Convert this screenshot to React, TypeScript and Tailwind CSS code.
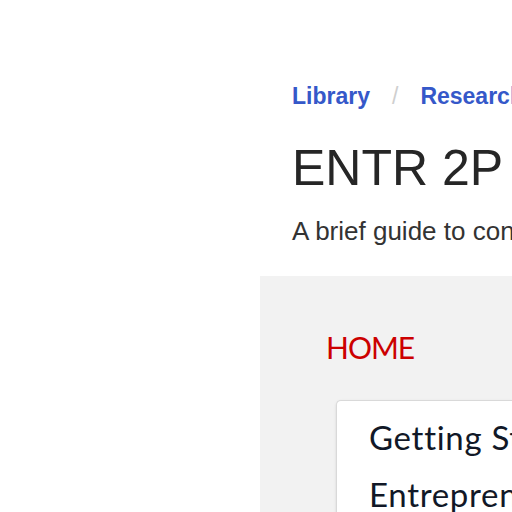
export default function App() {
  const nav = ['Getting Started', 'Entrepreneurship', 'Market Research']

  return (
    <div className="w-[512px] h-[512px] overflow-hidden bg-white whitespace-nowrap">
      <div className="pl-[292px] pt-[85px] font-['Liberation_Sans',Arial,sans-serif]">
        <nav className="flex items-center text-[23px] leading-[22px] font-bold text-[#3558c9]">
          <span>Library</span>
          <span className="mx-[22px] font-normal text-[#cfcfcf]">/</span>
          <span>Research Guides</span>
        </nav>
        <h1 className="mt-[36px] text-[50px] leading-[50px] text-[#262626]">ENTR 2P Guide</h1>
        <p className="mt-[25px] text-[26px] leading-[26px] text-[#333333]">
          A brief guide to conducting entrepreneurship research
        </p>
      </div>

      <div className="ml-[260px] mt-[32px] bg-[#f2f2f2] pl-[66px] pt-[56px] pb-10 font-['Lato',sans-serif]">
        <div className="text-[30px] leading-[31px] tracking-[-1px] text-[#cc0000]">HOME</div>
        <div className="ml-[10px] mt-[37px] rounded-l-[5px] border border-r-0 border-[#d9d9d9] bg-white pl-[32px] pt-[20px] shadow-sm">
          <ul className="flex flex-col gap-[24px] text-[33px] leading-[33px] tracking-[0.7px] text-[#111827]">
            {nav.map(item => (
              <li key={item}>{item}</li>
            ))}
          </ul>
        </div>
      </div>
    </div>
  )
}
